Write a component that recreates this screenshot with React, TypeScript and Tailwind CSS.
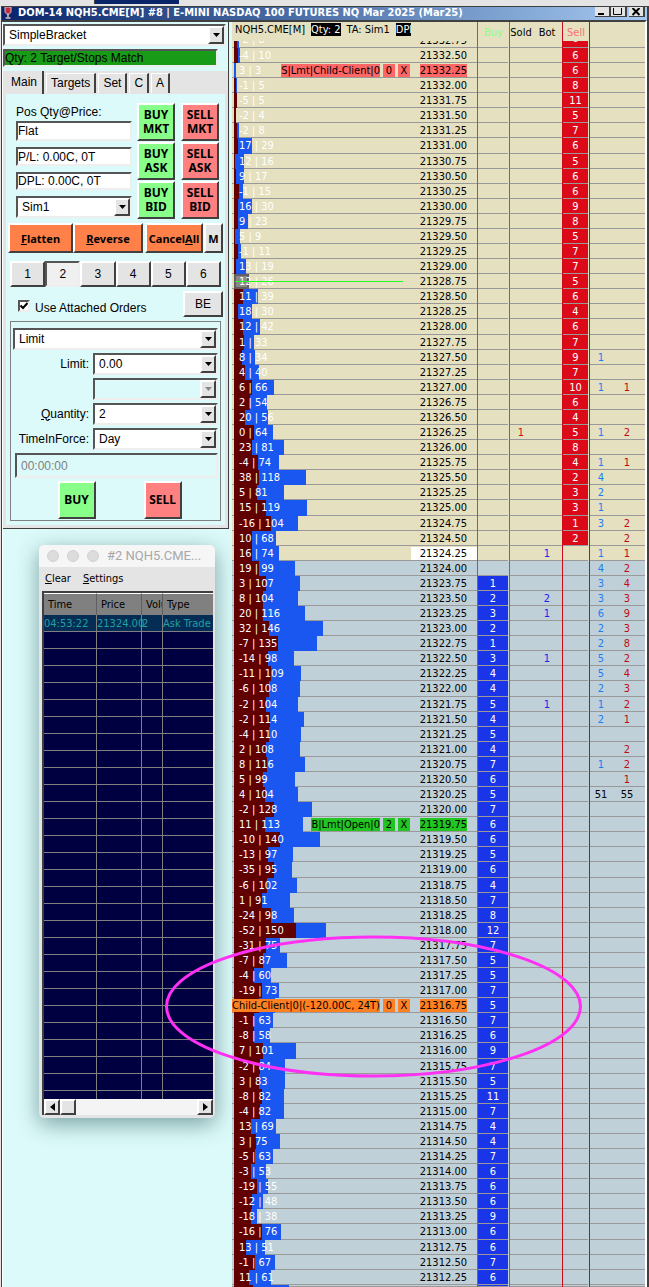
import { ReactNode } from "react"
import clsx from "clsx"

type Order = { label: string; qty: number; fill: string; wide?: boolean }

// [delta, volume, resting size]
const levels: [number, number, number][] = [
  [-2, 8, 6], [-4, 10, 6], [3, 3, 6], [-1, 5, 8], [-5, 5, 11], [-2, 4, 5], [-2, 8, 7], [17, 29, 6],
  [12, 16, 5], [9, 17, 6], [-1, 15, 6], [16, 30, 9], [9, 23, 8], [5, 9, 5], [-1, 11, 7], [13, 19, 7],
  [12, 26, 5], [11, 39, 6], [18, 30, 4], [12, 42, 6], [1, 33, 7], [8, 34, 9], [4, 40, 7], [6, 66, 10],
  [2, 54, 6], [20, 56, 4], [0, 64, 5], [23, 81, 8], [-4, 74, 4], [38, 118, 2], [5, 81, 3], [15, 119, 3],
  [-16, 104, 1], [10, 68, 2], [16, 74, 0], [19, 99, 0], [3, 107, 1], [8, 104, 2], [20, 116, 3], [32, 146, 2],
  [-7, 135, 1], [-14, 98, 3], [-11, 109, 4], [-6, 108, 4], [-2, 104, 5], [-2, 114, 4], [-4, 110, 5], [2, 108, 4],
  [8, 116, 7], [5, 99, 6], [4, 104, 5], [-2, 128, 7], [11, 113, 6], [-10, 140, 6], [-13, 97, 5], [-35, 95, 6],
  [-6, 102, 4], [1, 91, 7], [-24, 98, 8], [-52, 150, 12], [-31, 75, 7], [-7, 87, 5], [-4, 60, 5], [-19, 73, 7],
  [-13, 67, 5], [-1, 63, 7], [-8, 58, 6], [7, 101, 9], [-2, 84, 7], [3, 83, 5], [-8, 82, 11], [-4, 82, 7],
  [13, 69, 4], [3, 75, 4], [-5, 63, 7], [-3, 53, 6], [-19, 55, 6], [-12, 48, 6], [-18, 38, 9], [-16, 76, 6],
  [13, 51, 6], [-1, 67, 7], [11, 61, 6], [28, 90, 6],
]

const TOP_PRICE = 21332.75
const LAST_PRICE = "21324.25"
const PX_PER_LOT = 0.613

const orders: Record<string, Order> = {
  "21332.25": { label: "S|Lmt|Child-Client|0", qty: 0, fill: "bg-[#ff6666]" },
  "21319.75": { label: "B|Lmt|Open|0", qty: 2, fill: "bg-[#22c522]" },
  "21316.75": { label: "Child-Client|0|(-120.00C, 24T)", qty: 0, fill: "bg-[#ff8022]", wide: true },
}

const sold: Record<string, number> = { "21326.25": 1 }
const bought: Record<string, number> = {
  "21324.25": 1, "21323.50": 2, "21323.25": 1, "21322.50": 1, "21321.75": 1,
}

const recent: Record<string, [number, number]> = {
  "21327.50": [1, 0], "21327.00": [1, 1], "21326.25": [1, 2], "21325.75": [1, 1], "21325.50": [4, 0],
  "21325.25": [2, 0], "21325.00": [1, 0], "21324.75": [3, 2], "21324.50": [0, 2], "21324.25": [1, 1],
  "21324.00": [4, 2], "21323.75": [3, 4], "21323.50": [3, 3], "21323.25": [6, 9], "21323.00": [2, 3],
  "21322.75": [2, 8], "21322.50": [5, 2], "21322.25": [5, 4], "21322.00": [2, 3], "21321.75": [1, 2],
  "21321.50": [2, 1], "21321.00": [0, 2], "21320.75": [1, 2], "21320.50": [0, 1], "21320.25": [51, 55],
}

const raised = "border-2 border-t-white border-l-white border-r-[#404040] border-b-[#404040]"
const sunken = "border-2 border-t-[#555555] border-l-[#555555] border-r-[#eeeeee] border-b-[#eeeeee]"

function Combo({ value, label, id, disabled, className }: {
  value: string; label?: string; id?: string; disabled?: boolean; className?: string
}) {
  return (
    <div className={clsx("relative h-[22px] min-w-0", className)}>
      <select
        id={id}
        aria-label={label}
        disabled={disabled}
        className={clsx("block h-full w-full appearance-none pl-1 pr-5", sunken, disabled ? "bg-[#dcfafa]" : "bg-white")}
      >
        <option>{value}</option>
      </select>
      <span className={clsx("pointer-events-none absolute inset-y-[2px] right-[2px] flex w-4 items-center justify-center bg-[#e4e4e4]", raised)}>
        <svg width="7" height="4" viewBox="0 0 7 4" fill={disabled ? "#888888" : "#000000"}>
          <path d="M0 0h7L3.5 4z" />
        </svg>
      </span>
    </div>
  )
}

function TradeButton({ children, sell }: { children: ReactNode; sell?: boolean }) {
  return (
    <button className={clsx("h-[38px] w-[38px] font-['Noto_Sans'] text-[12px] leading-[14px] font-bold", raised, sell ? "bg-[#ff8080]" : "bg-[#88ff88]")}>
      {children}
    </button>
  )
}

function Field({ id, label, children }: { id: string; label: ReactNode; children: ReactNode }) {
  return (
    <div className="flex items-center gap-1">
      <label htmlFor={id} className="w-[76px] shrink-0 text-right">{label}</label>
      {children}
    </div>
  )
}

function OrderPanel() {
  return (
    <section className="border-r border-b border-[#404040] bg-[#dcfafa] font-['Liberation_Sans',sans-serif] text-[12px] leading-[15px]">
      <div className="pt-[2px] pr-[2px]">
        <Combo value="SimpleBracket" label="Trade configuration" />
      </div>
      <div className={clsx("mt-[3px] mr-[10px] h-[18px] bg-[#189c18] leading-[14px]", sunken)}>Qty: 2 Target/Stops Match</div>

      <div className="mt-1 bg-[#e4e4e4] px-[3px] pb-[3px]">
        <div role="tablist" className="flex h-[23px] items-end gap-[2px]">
          <button role="tab" aria-selected="true" className="h-[23px] border-r-2 border-[#404040] px-[5px]">Main</button>
          {["Targets", "Set", "C", "A"].map((tab) => (
            <button key={tab} role="tab" aria-selected="false" className="mb-px h-5 border-t border-r-2 border-l border-t-white border-r-[#404040] border-l-white px-1">
              {tab}
            </button>
          ))}
        </div>

        <div className="bg-[#dcfafa] px-[2px] pt-[9px] pb-1">
          {/* Position and market buttons */}
          <div className="flex gap-[5px] pr-1 pl-2">
            <div className="flex min-w-0 flex-1 flex-col gap-[6px]">
              <div>
                <label htmlFor="position" className="block h-[18px] pt-[2px]">Pos Qty@Price:</label>
                <input id="position" readOnly value="Flat" className={clsx("block h-5 w-full bg-white", sunken)} />
              </div>
              <input aria-label="Profit and loss" readOnly value="P/L: 0.00C, 0T" className={clsx("block h-[19px] w-full bg-white", sunken)} />
              <input aria-label="Daily profit and loss" readOnly value="DPL: 0.00C, 0T" className={clsx("block h-[18px] w-full bg-white", sunken)} />
              <Combo value="Sim1" label="Trade account" />
            </div>
            <div className="grid grid-cols-2 gap-x-[6px] gap-y-px">
              {["MKT", "ASK", "BID"].map((kind) => [
                <TradeButton key={`buy-${kind}`}>BUY<br />{kind}</TradeButton>,
                <TradeButton key={`sell-${kind}`} sell>SELL<br />{kind}</TradeButton>,
              ])}
            </div>
          </div>

          <div className="mt-1 flex h-[30px] font-['Noto_Sans'] text-[11px] font-bold">
            <button className={clsx("w-[65px] bg-[#ff8048]", raised)}><u>F</u>latten</button>
            <button className={clsx("mr-[2px] flex-1 bg-[#ff8048]", raised)}><u>R</u>everse</button>
            <button className={clsx("w-[58px] bg-[#ff8048] whitespace-nowrap", raised)}>Cancel<u>A</u>ll</button>
            <button className={clsx("ml-px w-[19px] bg-[#e4e4e4]", raised)}>M</button>
          </div>

          <div className="mt-2 flex h-[26px] px-[2px]">
            {[1, 2, 3, 4, 5, 6].map((n) => (
              <button key={n} className={clsx("flex-1", n === 2 ? `bg-[#f0f0f0] ${sunken}` : `bg-[#e4e4e4] ${raised}`)}>{n}</button>
            ))}
          </div>

          <div className="mt-1 flex h-[26px] items-center justify-between pl-[10px]">
            <label className="flex items-center gap-[5px] pt-[8px]">
              <input type="checkbox" defaultChecked className="peer sr-only" />
              <span className={clsx("mb-1 flex size-3 items-center justify-center bg-white", sunken)}>
                <svg width="8" height="8" viewBox="0 0 8 8" fill="none" stroke="#000" strokeWidth="2">
                  <path d="M0.5 3.5L3 6L7.5 1" />
                </svg>
              </span>
              Use Attached Orders
            </label>
            <button className={clsx("h-[26px] w-10 bg-[#e4e4e4]", raised)}>BE</button>
          </div>

          {/* Order entry */}
          <div className="mx-[2px] mt-1 border border-[#808080] px-[2px] pt-[6px] pb-px">
            <div className="flex flex-col gap-[3px]">
              <Combo value="Limit" label="Order type" />
              <Field id="limit" label="Limit:"><Combo id="limit" value="0.00" className="flex-1" /></Field>
              <Field id="stop" label=""><Combo id="stop" value="" label="Stop" disabled className="flex-1" /></Field>
              <Field id="quantity" label={<><u>Q</u>uantity:</>}><Combo id="quantity" value="2" className="flex-1" /></Field>
              <Field id="tif" label="TimeInForce:"><Combo id="tif" value="Day" className="flex-1" /></Field>
              <input aria-label="Time" readOnly value="00:00:00" className={clsx("ml-[2px] block h-[25px] bg-[#dcfafa] px-1 text-[#808080]", sunken)} />
            </div>
            <div className="mt-[3px] flex justify-center gap-12 pl-2">
              <TradeButton>BUY</TradeButton>
              <TradeButton sell>SELL</TradeButton>
            </div>
          </div>
        </div>
      </div>
    </section>
  )
}

function TradeLog() {
  return (
    <section className="mr-[14px] ml-9 overflow-hidden rounded-[5px] bg-[#e4e4e4] shadow-[0_6px_22px_rgba(0,50,50,0.45)]">
      <header className="flex h-[22px] items-center gap-2 bg-[#f6f6f6] pl-2">
        {["close", "minimize", "zoom"].map((name) => (
          <button key={name} aria-label={name} className="size-3 shrink-0 rounded-full border border-[#d0d0d0] bg-[#dcdcdc]" />
        ))}
        <h2 className="font-['Roboto',sans-serif] text-[13px] whitespace-nowrap text-[#a8a8a8]">#2 NQH5.CME...</h2>
      </header>
      <nav className="flex h-6 items-center gap-3 px-[6px] text-[11px]">
        <a href="#clear"><u>C</u>lear</a>
        <a href="#settings"><u>S</u>ettings</a>
      </nav>
      <div className="mr-[2px] mb-[3px] ml-[3px] border-t-2 border-l-2 border-[#404040]">
        <table className="w-full table-fixed border-separate border-spacing-0 bg-[#000040] text-left leading-[15px] text-[#22a0a0]">
          <colgroup>
            <col className="w-[53px]" />
            <col className="w-[45px]" />
            <col className="w-[21px]" />
            <col />
          </colgroup>
          <thead>
            <tr className="h-[22px] bg-[#808080] text-black">
              {["Time", "Price", "Volu", "Type"].map((name) => (
                <th key={name} className="overflow-hidden border-t border-r border-t-white border-r-[#606060] p-0 pl-1 font-normal whitespace-nowrap last:border-r-0">{name}</th>
              ))}
            </tr>
          </thead>
          <tbody>
            <tr className="h-[17px] bg-[#042c54]">
              {["04:53:22", "21324.00", "2", "Ask Trade"].map((text) => (
                <td key={text} className="border-r border-b border-[#808080] p-0 whitespace-nowrap last:border-r-0">{text}</td>
              ))}
            </tr>
            {Array.from({ length: 28 }).map((_, i) => (
              <tr key={i} className={i < 27 ? "h-[17px]" : "h-2"}>
                {Array.from({ length: 4 }).map((_, c) => (
                  <td key={c} className={clsx("border-r border-[#808080] p-0 last:border-r-0", i < 27 && "border-b")} />
                ))}
              </tr>
            ))}
          </tbody>
        </table>
        <div className="flex h-4 bg-[#f4f4f4]">
          <button aria-label="Scroll left" className={clsx("flex w-4 items-center justify-center bg-[#e4e4e4]", raised)}>
            <svg width="5" height="8" viewBox="0 0 5 8"><path d="M5 0v8L0 4z" /></svg>
          </button>
          <div className={clsx("w-4 bg-[#e4e4e4]", raised)} />
          <button aria-label="Scroll right" className={clsx("ml-auto flex w-4 items-center justify-center bg-[#e4e4e4]", raised)}>
            <svg width="5" height="8" viewBox="0 0 5 8"><path d="M0 0v8l5-4z" /></svg>
          </button>
        </div>
      </div>
    </section>
  )
}

function OrderTag({ order }: { order: Order }) {
  return (
    <div className="z-10 flex h-[13px] justify-end gap-[3px] pr-px leading-[13px]">
      <span className={clsx("overflow-hidden whitespace-nowrap", order.fill, order.wide && "flex-1 text-right")}>{order.label}</span>
      <span className={clsx("w-3 text-center", order.fill)}>{order.qty}</span>
      <button className={clsx("w-3 text-center", order.fill)}>X</button>
    </div>
  )
}

function Level({ index }: { index: number }) {
  const [delta, volume, size] = levels[index]
  const price = (TOP_PRICE - index * 0.25).toFixed(2)
  const order = orders[price]
  const trades = recent[price]
  const total = Math.round(volume * PX_PER_LOT)
  const bid = Math.round(((volume - delta) / 2) * PX_PER_LOT)
  const marker = price === "21328.75"
  const totals = price === "21320.25"

  const first = index === 0
  const last = index === levels.length - 1
  const height = first ? "h-[7px]" : last ? "h-[2px]" : index % 12 === 7 ? "h-4" : "h-[15px]"
  // The first level is cut off by the header, the last one by the window edge
  const clip = clsx("grid grid-cols-[100%] grid-rows-[100%] overflow-hidden", height, first ? "items-end" : "items-start")
  const cell = "p-0 align-top"
  const line = "border-b border-[#999999]"
  const number = clsx("leading-4 text-center", line, height)

  return (
    <tr className={index <= 34 ? "bg-[#e4e0c0]" : "bg-[#c0d0d8]"}>
      <td className={cell}>
        <div className={clip}>
          <div className={clsx("col-start-1 row-start-1 flex", height)}>
            <span className={clsx("w-[2px]", line)} />
            {!marker && <span className="bg-[#600000]" style={{ width: bid }} />}
            {!marker && <span className="bg-[#1a56f0]" style={{ width: total - bid }} />}
            {marker && <span className="w-[15px] border-2 border-[#606060] bg-[#888888]" />}
            <span className={clsx("flex-1", line)} />
          </div>
          {!order?.wide && (
            <span className="col-start-1 row-start-1 pl-[7px] leading-4 whitespace-nowrap text-white">{delta} | {volume}</span>
          )}
          {marker && <span className="col-start-1 row-start-1 mr-2 ml-[3px] h-px self-center bg-[#22ff22]" />}
          {order && <div className="col-start-1 row-start-1 pt-px"><OrderTag order={order} /></div>}
        </div>
      </td>
      <td className={cell}>
        <div className={clsx(clip, line)}>
          <div className={first ? "pt-0" : "pt-px"}>
            <div className={clsx("h-[13px] pr-[10px] text-right leading-[13px]", price === LAST_PRICE && "bg-white")}>
              <span className={clsx("inline-block", order?.fill)}>{price}</span>
            </div>
          </div>
        </div>
      </td>
      <td className={clsx(cell, "border-l border-[#22a022] pr-px")}>
        <div className={clsx(number, "overflow-hidden text-white", index > 35 && "bg-[#1a34e8]")}>{index > 35 && size}</div>
      </td>
      <td className={clsx(cell, "border-l border-[#22a022]")}>
        <div className={clsx(number, "pr-1 text-[#cc1111]")}>{sold[price]}</div>
      </td>
      <td className={cell}>
        <div className={clsx(number, "pr-1 text-[#2222ee]")}>{bought[price]}</div>
      </td>
      <td className={clsx(cell, "border-l border-[#cc0a18] pr-px")}>
        <div className={clsx(number, "overflow-hidden text-white", index < 34 && "bg-[#dc0a18]", first && "flex items-end justify-center")}>{index < 34 && size}</div>
      </td>
      <td className={clsx(cell, "border-l border-[#cc0a18]")}>
        <div className={clsx(number, "pr-1", totals ? "text-black" : "text-[#1a80f0]")}>{trades?.[0] || null}</div>
      </td>
      <td className={cell}>
        <div className={clsx(number, "pr-[7px]", totals ? "text-black" : "text-[#c00a18]")}>{trades?.[1] || null}</div>
      </td>
    </tr>
  )
}

function Ladder() {
  return (
    <table className="w-full table-fixed border-separate border-spacing-0">
      <colgroup>
        <col />
        <col className="w-[66px]" />
        <col className="w-8" />
        <col className="w-[27px]" />
        <col className="w-[26px]" />
        <col className="w-[27px]" />
        <col className="w-[27px]" />
        <col className="w-[29px]" />
      </colgroup>
      <thead>
        <tr className="h-[19px] bg-[#e4e0c0] leading-[13px]">
          <th colSpan={2} className="p-0 pt-px pl-[3px] align-top font-normal">
            <div className="flex gap-[6px] whitespace-nowrap">
              <span>NQH5.CME[M]</span>
              <span className="bg-black text-white">Qty: 2</span>
              <span>TA: Sim1</span>
              <span className="w-[15px] overflow-hidden bg-black text-white">DPL</span>
            </div>
          </th>
          <th className="border-l border-[#22a022] p-0 pb-[2px] align-bottom font-normal text-[#88ff88]">Buy</th>
          <th className="border-l border-[#22a022] p-0 pr-1 pb-[2px] align-bottom font-normal">Sold</th>
          <th className="p-0 pr-1 pb-[2px] align-bottom font-normal">Bot</th>
          <th className="border-l border-[#cc0a18] p-0 pb-[2px] align-bottom font-normal text-[#ff7070]">Sell</th>
          <th className="border-l border-[#cc0a18] p-0" />
          <th className="p-0" />
        </tr>
      </thead>
      <tbody>
        {levels.map((_, i) => (
          <Level key={i} index={i} />
        ))}
      </tbody>
    </table>
  )
}

function TitleBar() {
  return (
    <header className="flex h-[13px] items-start overflow-hidden bg-linear-to-r from-[#0a246a] to-[#a6caf0] pr-[2px]">
      <svg width="11" height="12" viewBox="0 0 11 12" className="mr-1 ml-px shrink-0">
        <path d="M2 0h6v4c0 2-1 3-3 3s-3-1-3-3z" fill="#c03040" stroke="#e0c0c8" />
        <path d="M5 7v3M2.5 11h5" stroke="#e0c0c8" strokeWidth="1.5" />
      </svg>
      <h1 className="min-w-0 flex-1 overflow-hidden font-['DejaVu_Sans_Condensed','DejaVu_Sans',sans-serif] text-[11px] leading-[11px] font-bold whitespace-nowrap text-white">
        DOM-14 NQH5.CME[M] #8 | E-MINI NASDAQ 100 FUTURES NQ Mar 2025 (Mar25)
      </h1>
      <div className="flex">
        <button aria-label="Minimize" className="h-[10px] w-4 border-r-2 border-b border-[#404040] bg-[#e4e4e4]">
          <svg width="12" height="8" viewBox="0 0 12 8"><path d="M3 5h6v2H3z" /></svg>
        </button>
        <button aria-label="Maximize" className="h-[10px] w-4 border-r-2 border-b border-[#404040] bg-[#e4e4e4]">
          <svg width="13" height="8" viewBox="0 0 13 8"><path d="M2.5 0v6.5h8V0" fill="none" stroke="#000" /></svg>
        </button>
        <button aria-label="Close" className="ml-[2px] h-[10px] w-4 border-r-2 border-b border-[#404040] bg-[#e4e4e4]">
          <svg width="13" height="8" viewBox="0 0 13 8"><path d="M3.5 0l7 7M10.5 0l-7 7" stroke="#000" strokeWidth="2" /></svg>
        </button>
      </div>
    </header>
  )
}

export default function App() {
  return (
    <div className="relative min-h-screen overflow-hidden bg-[#e4e4e4] font-['DejaVu_Sans_Condensed','DejaVu_Sans',sans-serif] text-[11px] text-black">
      <div className="h-[6px]">
        <div className="ml-[94px] h-1 w-[85px] border-l border-[#404040] bg-[#0a246a]" />
      </div>
      <main className="ml-px border-t border-r-2 border-l border-[#404040]">
        <TitleBar />
        <div className="flex border-t-2 border-r-2 border-[#404040] border-r-white">
          <div className="flex w-[230px] shrink-0 flex-col gap-4 border-l border-white bg-[#dcfafa] pr-[3px]">
            <OrderPanel />
            <TradeLog />
          </div>
          <div className="min-w-0 flex-1">
            <Ladder />
          </div>
        </div>
      </main>
      <svg className="pointer-events-none absolute top-[934px] left-[164px]" width="419" height="145" viewBox="0 0 419 145" fill="none">
        <ellipse cx="209.5" cy="72.5" rx="207" ry="69.5" stroke="#ff30f4" strokeWidth="3" />
      </svg>
    </div>
  )
}
